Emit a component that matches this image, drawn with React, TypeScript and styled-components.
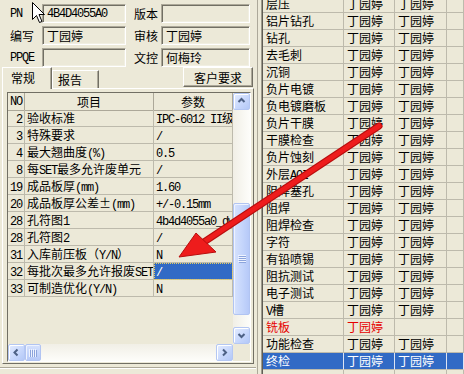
import React from "react"
import styled, { createGlobalStyle } from "styled-components"

const CJK = `"Noto Sans CJK SC", "Liberation Sans", sans-serif`
const MONO = `"Liberation Mono", "Noto Sans CJK SC", monospace`

const GlobalStyle = createGlobalStyle`
  html, body {
    margin: 0;
    padding: 0;
  }
  body {
    width: 464px;
    height: 374px;
    overflow: hidden;
    background: #ece9d8;
  }
`

const Screen = styled.div`
  position: relative;
  width: 464px;
  height: 374px;
  display: flex;
  overflow: hidden;
  background: #ece9d8;
  font-family: ${CJK};
  font-size: 12px;
  color: #000;
`

const Latin = styled.span`
  font-family: ${MONO};
  font-size: 12px;
  letter-spacing: -1.2px;
`

// ascii runs get the narrow mono face, like SimSun half-width glyphs
function Mixed({ text }: { text: string }) {
  const parts = text.split(/([\x20-\x7e]+)/).filter(Boolean)
  return (
    <>
      {parts.map((p, i) =>
        /^[\x20-\x7e]+$/.test(p) ? <Latin key={i}>{p}</Latin> : <React.Fragment key={i}>{p}</React.Fragment>
      )}
    </>
  )
}

/* ---------- left side ---------- */

const LeftPanel = styled.div`
  width: 256px;
  flex: none;
  display: flex;
  flex-direction: column;
`

const InfoForm = styled.div`
  box-sizing: border-box;
  height: 67px;
  padding-top: 4px;
  display: grid;
  grid-template-columns: 42px 84px 35px 89px;
  grid-auto-rows: 19px;
  row-gap: 3px;
`

const FieldLabel = styled.div<{ $indent: number }>`
  padding-left: ${p => p.$indent}px;
  display: flex;
  align-items: center;
  white-space: nowrap;
`

const Field = styled.div`
  box-sizing: border-box;
  height: 19px;
  border: 1px solid;
  border-color: #aca899 #fff #fff #aca899;
  box-shadow: inset 1px 1px 0 #716f64, inset -1px -1px 0 #f1efe2;
  padding-left: 4px;
  display: flex;
  align-items: center;
  white-space: nowrap;
  overflow: hidden;
`

const TabStrip = styled.div`
  height: 21px;
  display: flex;
  align-items: flex-end;
  padding: 0 3px 0 2px;
  position: relative;
  z-index: 1;
`

const Tab = styled.div<{ $active?: boolean }>`
  box-sizing: border-box;
  height: ${p => (p.$active ? 22 : 18)}px;
  width: ${p => (p.$active ? 50 : 47)}px;
  margin-bottom: ${p => (p.$active ? -1 : 0)}px;
  border: 1px solid;
  border-bottom: none;
  border-color: #fff #716f64 transparent #fff;
  box-shadow: inset -1px 0 0 #aca899;
  background: #ece9d8;
  padding: ${p => (p.$active ? "2px 0 0 8px" : "1px 0 0 5px")};
  line-height: 16px;
  font-size: 12px;
`

const PushButton = styled.div`
  box-sizing: border-box;
  margin-left: auto;
  align-self: flex-start;
  width: 70px;
  height: 20px;
  border: 1px solid;
  border-color: #fff #716f64 #716f64 #fff;
  box-shadow: inset -1px -1px 0 #aca899;
  display: flex;
  align-items: center;
  justify-content: center;
  font-size: 12px;
`

const TabPage = styled.div`
  box-sizing: border-box;
  height: 276px;
  margin: 0 2px;
  border: 1px solid;
  border-color: #fff #716f64 #716f64 #fff;
  padding: 3px 2px 1px 4px;
`

const GridBox = styled.div`
  box-sizing: border-box;
  height: 100%;
  border: 1px solid;
  border-color: #716f64 #fff #fff #716f64;
  display: grid;
  grid-template-columns: 225px 17px;
  grid-template-rows: 251px 17px;
`

const DataArea = styled.div`
  overflow: hidden;
  background: #ece9d8;
`

const ParamTable = styled.div`
  display: grid;
  grid-template-columns: 17px 129px 79px;
  grid-auto-rows: 17px;
`

const HeadCell = styled.div`
  box-sizing: border-box;
  height: 18px;
  border-right: 1px solid #aca899;
  border-bottom: 1px solid #aca899;
  display: flex;
  align-items: center;
  justify-content: center;
  white-space: nowrap;
  overflow: hidden;
`

const Cell = styled.div<{ $num?: boolean; $selected?: boolean }>`
  box-sizing: border-box;
  border-right: 1px solid #bdbaac;
  border-bottom: 1px solid #bdbaac;
  line-height: 16px;
  white-space: nowrap;
  overflow: hidden;
  text-align: ${p => (p.$num ? "right" : "left")};
  padding: ${p => (p.$num ? "0 2px 0 0" : "0 0 0 2px")};
  background: ${p => (p.$selected ? "#316ac5" : "transparent")};
  color: ${p => (p.$selected ? "#fff" : "#000")};
  outline: ${p => (p.$selected ? "1px dotted #e8d060" : "none")};
  outline-offset: -1px;
`

const VScroll = styled.div`
  display: flex;
  flex-direction: column;
  background: linear-gradient(to right, #f1efe6, #fdfdfa);
`

const HScroll = styled.div`
  display: flex;
  background: linear-gradient(to bottom, #f1efe6, #fdfdfa);
`

const ScrollTrack = styled.div<{ $vertical?: boolean }>`
  flex: 1;
  display: flex;
  flex-direction: ${p => (p.$vertical ? "column" : "row")};
`

const ScrollButton = styled.div`
  box-sizing: border-box;
  width: 17px;
  height: 17px;
  flex: none;
  border: 1px solid #b4c7f3;
  border-radius: 2px;
  background: linear-gradient(135deg, #e4ecff 0%, #c8d8fc 55%, #b3c8f7 100%);
  box-shadow: inset 1px 1px 0 #fff;
  display: flex;
  align-items: center;
  justify-content: center;
`

const Thumb = styled.div<{ $vertical?: boolean; $offset: number; $length: number }>`
  box-sizing: border-box;
  flex: none;
  ${p =>
    p.$vertical
      ? `width: 17px; height: ${p.$length}px; margin-top: ${p.$offset}px;`
      : `height: 17px; width: ${p.$length}px; margin-left: ${p.$offset}px;`}
  border: 1px solid #b1c4f2;
  border-radius: 2px;
  background: linear-gradient(${p => (p.$vertical ? "to right" : "to bottom")}, #d6e2fd, #c3d4fb 60%, #b6c9f8);
  box-shadow: inset 1px 1px 0 #eef3ff;
  display: flex;
  align-items: center;
  justify-content: center;
`

const Corner = styled.div`
  background: #ece9d8;
`

const Footer = styled.div`
  margin-top: 3px;
  border-top: 1px solid #aca899;
  box-shadow: inset 0 1px 0 #fff;
  flex: 1;
`

/* ---------- right side ---------- */

const RightPanel = styled.div`
  flex: 1;
  display: flex;
  overflow: hidden;
  margin-left: 1px;
  border-left: 1px solid #aca899;
  padding-left: 3px;
`

const GridFrame = styled.div`
  flex: 1;
  border-left: 1px solid #9d9a8c;
  overflow: hidden;
`

const ProcessGrid = styled.div`
  border-left: 1px solid #5f5d55;
  margin-top: -4px;
  display: grid;
  grid-template-columns: 81px 51px 52px 1fr;
  grid-auto-rows: 17px;
`

const ProcCell = styled.div<{ $red?: boolean; $selected?: boolean }>`
  box-sizing: border-box;
  border-right: 1px solid ${p => (p.$selected ? "#dce4f4" : "#bdbaac")};
  border-bottom: 1px solid #bdbaac;
  padding-left: 3px;
  line-height: 16px;
  white-space: nowrap;
  overflow: hidden;
  background: ${p => (p.$selected ? "#316ac5" : "transparent")};
  color: ${p => (p.$selected ? "#fff" : p.$red ? "#e60000" : "#000")};
`

const Overlay = styled.svg`
  position: absolute;
  left: 0;
  top: 0;
  pointer-events: none;
`

/* ---------- data ---------- */

const params = [
  { no: "2", item: "验收标准", value: "IPC-6012 II级" },
  { no: "3", item: "特殊要求", value: "/" },
  { no: "4", item: "最大翘曲度(%)", value: "0.5" },
  { no: "8", item: "每SET最多允许废单元", value: "/" },
  { no: "19", item: "成品板厚(mm)", value: "1.60" },
  { no: "20", item: "成品板厚公差±(mm)", value: "+/-0.15mm" },
  { no: "28", item: "孔符图1", value: "4b4d4055a0_dw" },
  { no: "28", item: "孔符图2", value: "/" },
  { no: "31", item: "入库前压板（Y/N）", value: "N" },
  { no: "32", item: "每批次最多允许报废SET", value: "/", selected: true },
  { no: "33", item: "可制造优化(Y/N)", value: "N" },
]

const steps = [
  "层压", "铝片钻孔", "钻孔", "去毛刺", "沉铜", "负片电镀", "负电镀磨板", "负片干膜",
  "干膜检查", "负片蚀刻", "外层AOI", "阻焊塞孔", "阻焊", "阻焊检查", "字符", "有铅喷锡",
  "阻抗测试", "电子测试", "V槽", "铣板", "功能检查", "终检",
]

const Chevron = ({ dir }: { dir: "up" | "down" | "left" | "right" }) => {
  const d = {
    up: "M4.5 8 L7.5 5 L10.5 8",
    down: "M4.5 6 L7.5 9 L10.5 6",
    left: "M8.5 4.5 L5.5 7.5 L8.5 10.5",
    right: "M6 4.5 L9 7.5 L6 10.5",
  }[dir]
  return (
    <svg width="15" height="15" viewBox="0 0 15 15">
      <path d={d} fill="none" stroke="#4d6185" strokeWidth="2" />
    </svg>
  )
}

const Grip = ({ vertical }: { vertical?: boolean }) => (
  <svg width="8" height="8" viewBox="0 0 8 8">
    {[1, 3, 5, 7].map(v =>
      vertical ? (
        <line key={v} x1="0" x2="8" y1={v - 0.5} y2={v - 0.5} stroke="#eef3ff" />
      ) : (
        <line key={v} y1="0" y2="8" x1={v - 0.5} x2={v - 0.5} stroke="#eef3ff" />
      )
    )}
    {[1, 3, 5, 7].map(v =>
      vertical ? (
        <line key={"d" + v} x1="1" x2="8" y1={v + 0.5} y2={v + 0.5} stroke="#8ca4dc" />
      ) : (
        <line key={"d" + v} y1="1" y2="8" x1={v + 0.5} x2={v + 0.5} stroke="#8ca4dc" />
      )
    )}
  </svg>
)

export default function App() {
  return (
    <Screen>
      <GlobalStyle />
      <LeftPanel>
        <InfoForm>
          <FieldLabel $indent={10}><Mixed text="PN" /></FieldLabel>
          <Field><Mixed text="4B4D4055A0" /></Field>
          <FieldLabel $indent={8}>版本</FieldLabel>
          <Field />
          <FieldLabel $indent={10}>编写</FieldLabel>
          <Field>丁园婷</Field>
          <FieldLabel $indent={8}>审核</FieldLabel>
          <Field>丁园婷</Field>
          <FieldLabel $indent={10}><Mixed text="PPQE" /></FieldLabel>
          <Field />
          <FieldLabel $indent={8}>文控</FieldLabel>
          <Field>何梅玲</Field>
        </InfoForm>

        <TabStrip>
          <Tab $active>常规</Tab>
          <Tab>报告</Tab>
          <PushButton>客户要求</PushButton>
        </TabStrip>

        <TabPage>
          <GridBox>
            <DataArea>
              <ParamTable>
                <HeadCell><Mixed text="NO" /></HeadCell>
                <HeadCell>项目</HeadCell>
                <HeadCell>参数</HeadCell>
                {params.map((r, i) => (
                  <React.Fragment key={i}>
                    <Cell $num><Mixed text={r.no} /></Cell>
                    <Cell><Mixed text={r.item} /></Cell>
                    <Cell $selected={r.selected}><Mixed text={r.value} /></Cell>
                  </React.Fragment>
                ))}
              </ParamTable>
            </DataArea>
            <VScroll>
              <ScrollButton><Chevron dir="up" /></ScrollButton>
              <ScrollTrack $vertical>
                <Thumb $vertical $offset={93} $length={112}><Grip vertical /></Thumb>
              </ScrollTrack>
              <ScrollButton><Chevron dir="down" /></ScrollButton>
            </VScroll>
            <HScroll>
              <ScrollButton><Chevron dir="left" /></ScrollButton>
              <ScrollTrack>
                <Thumb $offset={0} $length={16}><Grip /></Thumb>
              </ScrollTrack>
              <ScrollButton><Chevron dir="right" /></ScrollButton>
            </HScroll>
            <Corner />
          </GridBox>
        </TabPage>
        <Footer />
      </LeftPanel>

      <RightPanel>
        <GridFrame>
          <ProcessGrid>
            {steps.map((s, i) => {
              const red = s === "铣板"
              const selected = s === "终检"
              return (
                <React.Fragment key={i}>
                  <ProcCell $red={red} $selected={selected}><Mixed text={s} /></ProcCell>
                  <ProcCell $red={red} $selected={selected}>丁园婷</ProcCell>
                  <ProcCell $red={red} $selected={selected}>{red ? "" : "丁园婷"}</ProcCell>
                  <ProcCell $red={red} $selected={selected} />
                </React.Fragment>
              )
            })}
            <ProcCell /><ProcCell /><ProcCell /><ProcCell />
          </ProcessGrid>
        </GridFrame>
      </RightPanel>

      <Overlay width="464" height="374" viewBox="0 0 464 374">
        <line x1="379" y1="126" x2="204" y2="242" stroke="#b80d0d" strokeWidth="7" strokeLinecap="round" />
        <line x1="379" y1="126" x2="204" y2="242" stroke="#ee1c1c" strokeWidth="5" strokeLinecap="round" />
        <polygon points="179,257 196,233 216,252" fill="#ee1c1c" stroke="#b80d0d" strokeWidth="1" strokeLinejoin="round" />
        <path
          d="M32.5 2.5 L32.5 19.5 L36.5 15.5 L39.5 22.5 L42 21.5 L39 14.5 L44.5 14.5 Z"
          fill="#fff"
          stroke="#000"
          strokeWidth="1"
        />
      </Overlay>
    </Screen>
  )
}
